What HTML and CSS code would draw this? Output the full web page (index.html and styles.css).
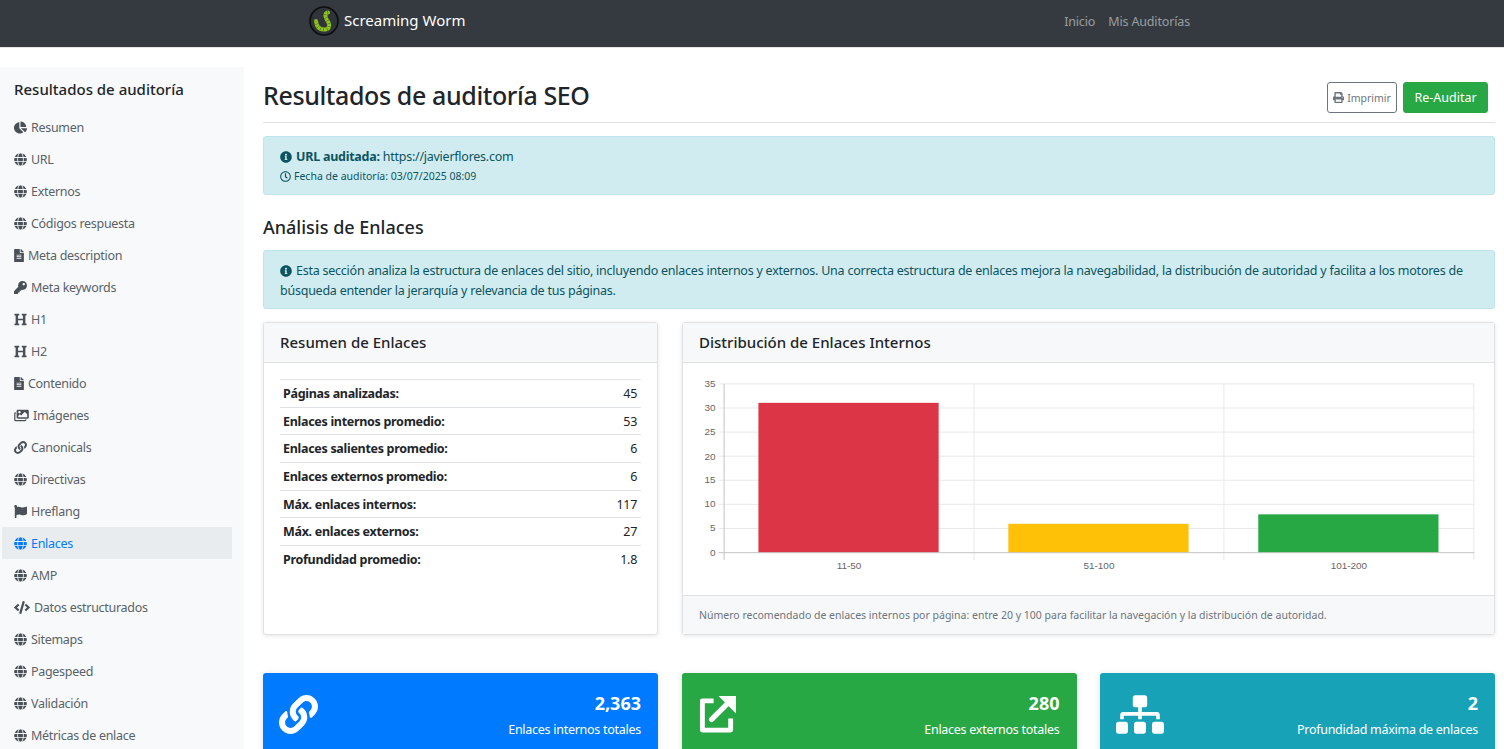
FILE: index.html
```html
<!DOCTYPE html>
<html lang="es">
<head>
    <meta charset="UTF-8">
    <meta name="viewport" content="width=device-width, initial-scale=1.0">
    <title>Resultados de auditoría SEO</title>
    <link rel="stylesheet" href="styles.css">
</head>
<body>
    <svg class="sprite" aria-hidden="true">
        <symbol id="i-globe" viewBox="0 0 496 512"><path d="M336.5 160C322 70.7 287.8 8 248 8s-74 62.7-88.5 152h177zM152 256c0 22.2 1.2 43.5 3.3 64h185.3c2.1-20.5 3.3-41.8 3.3-64s-1.2-43.5-3.3-64H155.3c-2.1 20.5-3.3 41.8-3.3 64zm324.7-96c-28.6-67.9-86.5-120.4-158-141.6 24.4 33.8 41.2 84.7 50 141.6h108zM177.2 18.4C105.8 39.6 47.8 92.1 19.3 160h108c8.7-56.9 25.5-107.8 49.9-141.6zM487.4 192H372.7c2.1 21 3.3 42.5 3.3 64s-1.2 43-3.3 64h114.6c5.5-20.5 8.6-41.8 8.6-64s-3.1-43.5-8.5-64zM120 256c0-21.5 1.2-43 3.3-64H8.6C3.2 212.5 0 233.8 0 256s3.2 43.5 8.6 64h114.6c-2-21-3.2-42.5-3.2-64zm39.5 96c14.5 89.3 48.7 152 88.5 152s74-62.7 88.5-152h-177zm159.3 141.6c71.4-21.2 129.4-73.7 158-141.6h-108c-8.8 56.9-25.6 107.8-50 141.6zM19.3 352c28.6 67.9 86.5 120.4 158 141.6-24.4-33.8-41.2-84.7-50-141.6h-108z"/></symbol>
        <symbol id="i-pie" viewBox="0 0 544 512"><path d="M527.79 288H290.5l158.03 158.03c6.04 6.04 15.98 6.53 22.19.68 38.7-36.46 65.32-85.61 73.13-140.86 1.34-9.46-6.51-17.85-16.06-17.85zm-15.83-64.8C503.72 103.74 408.26 8.28 288.8.04 279.68-.59 272 7.1 272 16.24V240h223.77c9.14 0 16.82-7.68 16.19-16.8zM224 288V50.71c0-9.55-8.39-17.4-17.84-16.06C86.99 51.49-4.1 155.6.14 280.37 4.5 408.51 114.83 513.59 243.03 511.98c50.4-.63 96.97-16.87 135.26-44.03 7.9-5.6 8.42-17.23 1.57-24.08L224 288z"/></symbol>
        <symbol id="i-file" viewBox="0 0 384 512"><path d="M224 136V0H24C10.7 0 0 10.7 0 24v464c0 13.3 10.7 24 24 24h336c13.3 0 24-10.7 24-24V160H248c-13.2 0-24-10.8-24-24zm64 236c0 6.6-5.4 12-12 12H108c-6.6 0-12-5.4-12-12v-8c0-6.6 5.4-12 12-12h168c6.6 0 12 5.4 12 12v8zm0-64c0 6.6-5.4 12-12 12H108c-6.6 0-12-5.4-12-12v-8c0-6.6 5.4-12 12-12h168c6.6 0 12 5.4 12 12v8zm0-72v8c0 6.6-5.4 12-12 12H108c-6.6 0-12-5.4-12-12v-8c0-6.6 5.4-12 12-12h168c6.6 0 12 5.4 12 12zm96-114.1v6.1H256V0h6.1c6.4 0 12.5 2.5 17 7l97.9 98c4.5 4.5 7 10.6 7 16.9z"/></symbol>
        <symbol id="i-key" viewBox="0 0 512 512"><path d="M512 176.001C512 273.203 433.202 352 336 352c-11.22 0-22.19-1.062-32.827-3.069l-24.012 27.014A23.999 23.999 0 0 1 261.223 384H224v40c0 13.255-10.745 24-24 24h-40v40c0 13.255-10.745 24-24 24H24c-13.255 0-24-10.745-24-24v-78.059c0-6.365 2.529-12.47 7.029-16.971l161.802-161.802C163.108 213.814 160 195.271 160 176 160 78.798 238.797.001 335.999 0 433.488-.001 512 78.511 512 176.001zM336 128c0 26.51 21.49 48 48 48s48-21.49 48-48-21.49-48-48-48-48 21.49-48 48z"/></symbol>
        <symbol id="i-heading" viewBox="0 0 512 512"><path d="M448 96v320h32a16 16 0 0 1 16 16v32a16 16 0 0 1-16 16H320a16 16 0 0 1-16-16v-32a16 16 0 0 1 16-16h32V288H160v128h32a16 16 0 0 1 16 16v32a16 16 0 0 1-16 16H32a16 16 0 0 1-16-16v-32a16 16 0 0 1 16-16h32V96H32a16 16 0 0 1-16-16V48a16 16 0 0 1 16-16h160a16 16 0 0 1 16 16v32a16 16 0 0 1-16 16h-32v128h192V96h-32a16 16 0 0 1-16-16V48a16 16 0 0 1 16-16h160a16 16 0 0 1 16 16v32a16 16 0 0 1-16 16z"/></symbol>
        <symbol id="i-images" viewBox="0 0 576 512"><path d="M480 416v16c0 26.51-21.49 48-48 48H48c-26.51 0-48-21.49-48-48V176c0-26.51 21.49-48 48-48h16v48H54a6 6 0 0 0-6 6v244a6 6 0 0 0 6 6h372a6 6 0 0 0 6-6v-10h48zM528 32H144c-26.51 0-48 21.49-48 48v256c0 26.51 21.49 48 48 48h384c26.51 0 48-21.49 48-48V80c0-26.51-21.49-48-48-48zM256 128c0 26.51-21.49 48-48 48s-48-21.49-48-48 21.49-48 48-48 48 21.49 48 48zm-96 144l55.515-55.515c4.686-4.686 12.284-4.686 16.971 0L272 256l135.515-135.515c4.686-4.686 12.284-4.686 16.971 0L512 208v112H160v-48z"/></symbol>
        <symbol id="i-link" viewBox="0 0 512 512"><path d="M326.612 185.391c59.747 59.809 58.927 155.698.36 214.59-.11.12-.24.25-.36.37l-67.2 67.2c-59.27 59.27-155.699 59.262-214.96 0-59.27-59.26-59.27-155.7 0-214.96l37.106-37.106c9.84-9.84 26.786-3.3 27.294 10.606.648 17.722 3.826 35.527 9.69 52.721 1.986 5.822.567 12.262-3.783 16.612l-13.087 13.087c-28.026 28.026-28.905 73.66-1.155 101.96 28.024 28.579 74.086 28.749 102.325.51l67.2-67.19c28.191-28.191 28.073-73.757 0-101.83-3.701-3.694-7.429-6.564-10.341-8.569a16.037 16.037 0 0 1-6.947-12.606c-.396-10.567 3.348-21.456 11.698-29.806l21.054-21.055c5.521-5.521 14.182-6.199 20.584-1.731a152.482 152.482 0 0 1 20.522 17.197zM467.547 44.449c-59.261-59.262-155.69-59.27-214.96 0l-67.2 67.2c-.12.12-.25.25-.36.37-58.566 58.892-59.387 154.781.36 214.59a152.454 152.454 0 0 0 20.521 17.196c6.402 4.468 15.064 3.789 20.584-1.731l21.054-21.055c8.35-8.35 12.094-19.239 11.698-29.806a16.037 16.037 0 0 0-6.947-12.606c-2.912-2.005-6.64-4.875-10.341-8.569-28.073-28.073-28.191-73.639 0-101.83l67.2-67.19c28.239-28.239 74.3-28.069 102.325.51 27.75 28.3 26.872 73.934-1.155 101.96l-13.087 13.087c-4.35 4.35-5.769 10.79-3.783 16.612 5.864 17.194 9.042 34.999 9.69 52.721.509 13.906 17.454 20.446 27.294 10.606l37.106-37.106c59.271-59.259 59.271-155.699.001-214.959z"/></symbol>
        <symbol id="i-flag" viewBox="0 0 512 512"><path d="M349.565 98.783C295.978 98.783 251.721 64 184.348 64c-24.955 0-47.309 4.384-68.045 12.013a55.947 55.947 0 0 0 3.586-23.562C118.117 24.015 94.806 1.206 66.338.048 34.345-1.254 8 24.296 8 56c0 19.026 9.497 35.825 24 45.945V488c0 13.255 10.745 24 24 24h16c13.255 0 24-10.745 24-24v-94.4c28.311-12.064 63.582-22.122 114.435-22.122 53.588 0 97.844 34.783 165.217 34.783 48.169 0 86.667-16.294 122.505-40.858C506.84 359.452 512 349.571 512 339.045v-243.1c0-23.393-24.269-38.87-45.485-29.016-34.338 15.948-76.454 31.854-116.95 31.854z"/></symbol>
        <symbol id="i-code" viewBox="0 0 640 512"><path d="M278.9 511.5l-61-17.7c-6.4-1.8-10-8.5-8.2-14.9L346.2 8.7c1.8-6.4 8.5-10 14.9-8.2l61 17.7c6.4 1.8 10 8.5 8.2 14.9L293.8 503.3c-1.9 6.4-8.5 10.1-14.9 8.2zm-114-112.2l43.5-46.4c4.6-4.9 4.3-12.7-.8-17.2L117 256l90.6-79.7c5.1-4.5 5.5-12.3.8-17.2l-43.5-46.4c-4.5-4.8-12.1-5.1-17-.5L3.8 247.2c-5.1 4.7-5.1 12.8 0 17.5l144.1 135.1c4.9 4.6 12.5 4.4 17-.5zm327.2.6l144.1-135.1c5.1-4.7 5.1-12.8 0-17.5L492.1 112.1c-4.8-4.5-12.4-4.3-17 .5L431.6 159c-4.6 4.9-4.3 12.7.8 17.2L523 256l-90.6 79.7c-5.1 4.5-5.5 12.3-.8 17.2l43.5 46.4c4.5 4.9 12.1 5.1 17 .6z"/></symbol>
        <symbol id="i-info" viewBox="0 0 512 512"><path d="M256 8C119.043 8 8 119.083 8 256c0 136.997 111.043 248 248 248s248-111.003 248-248C504 119.083 392.957 8 256 8zm0 110c23.196 0 42 18.804 42 42s-18.804 42-42 42-42-18.804-42-42 18.804-42 42-42zm56 254c0 6.627-5.373 12-12 12h-88c-6.627 0-12-5.373-12-12v-24c0-6.627 5.373-12 12-12h12v-64h-12c-6.627 0-12-5.373-12-12v-24c0-6.627 5.373-12 12-12h64c6.627 0 12 5.373 12 12v100h12c6.627 0 12 5.373 12 12v24z"/></symbol>
        <symbol id="i-clock" viewBox="0 0 512 512"><path d="M256 8C119 8 8 119 8 256s111 248 248 248 248-111 248-248S393 8 256 8zm0 448c-110.5 0-200-89.5-200-200S145.5 56 256 56s200 89.5 200 200-89.5 200-200 200zm61.8-104.4l-84.9-61.7c-3.1-2.3-4.9-5.9-4.9-9.7V116c0-6.6 5.4-12 12-12h32c6.6 0 12 5.4 12 12v141.7l66.8 48.6c5.4 3.9 6.5 11.4 2.6 16.8L334.6 349c-3.9 5.3-11.4 6.5-16.8 2.6z"/></symbol>
        <symbol id="i-print" viewBox="0 0 512 512"><path d="M448 192V77.25c0-8.49-3.37-16.62-9.37-22.63L393.37 9.37c-6-6-14.14-9.37-22.63-9.37H96C78.33 0 64 14.33 64 32v160c-35.35 0-64 28.65-64 64v112c0 8.84 7.16 16 16 16h48v96c0 17.67 14.33 32 32 32h320c17.67 0 32-14.33 32-32v-96h48c8.84 0 16-7.16 16-16V256c0-35.35-28.65-64-64-64zm-64 256H128v-96h256v96zm0-224H128V64h192v48c0 8.84 7.16 16 16 16h48v96zm48 72c-13.25 0-24-10.75-24-24 0-13.26 10.75-24 24-24s24 10.74 24 24c0 13.25-10.75 24-24 24z"/></symbol>
        <symbol id="i-sitemap" viewBox="0 0 640 512"><path d="M128 352H32c-17.67 0-32 14.33-32 32v96c0 17.67 14.33 32 32 32h96c17.67 0 32-14.33 32-32v-96c0-17.67-14.33-32-32-32zm-24-80h192v48h48v-48h192v48h48v-57.59c0-21.17-17.23-38.41-38.41-38.41H344v-64h40c17.67 0 32-14.33 32-32V32c0-17.67-14.33-32-32-32H256c-17.67 0-32 14.33-32 32v96c0 17.67 14.33 32 32 32h40v64H94.41C73.23 224 56 241.23 56 262.41V320h48v-48zm264 80h-96c-17.67 0-32 14.33-32 32v96c0 17.67 14.33 32 32 32h96c17.67 0 32-14.33 32-32v-96c0-17.67-14.33-32-32-32zm240 0h-96c-17.67 0-32 14.33-32 32v96c0 17.67 14.33 32 32 32h96c17.67 0 32-14.33 32-32v-96c0-17.67-14.33-32-32-32z"/></symbol>
    </svg>

    <nav class="navbar">
        <a class="brand" href="#">
            <svg class="brand-logo" viewBox="0 0 30 30">
                <circle cx="15" cy="15" r="14" fill="#2f343a" stroke="#0c0d0e" stroke-width="1.6"/>
                <path d="M19 6.500C15.500 7 16 11 18 14C21 18 21.500 23 16 23.500C10 24 7.500 20 7 15" fill="none" stroke="#8fc31f" stroke-width="4" stroke-linecap="round"/>
                <path d="M19 6.500C15.500 7 16 11 18 14C21 18 21.500 23 16 23.500C10 24 7.500 20 7 15" fill="none" stroke="#55730f" stroke-width="4" stroke-dasharray="0.6 2.6"/>
            </svg>
            <span class="brand-name">Screaming Worm</span>
        </a>
        <div class="nav-links">
            <a href="#">Inicio</a>
            <a href="#">Mis Auditorías</a>
        </div>
    </nav>

    <div class="layout">
        <aside class="sidebar">
            <h5 class="sidebar-title">Resultados de auditoría</h5>
            <ul class="side-menu">
                <li><a href="#"><svg class="ico"><use href="#i-pie"/></svg>Resumen</a></li>
                <li><a href="#"><svg class="ico"><use href="#i-globe"/></svg>URL</a></li>
                <li><a href="#"><svg class="ico"><use href="#i-globe"/></svg>Externos</a></li>
                <li><a href="#"><svg class="ico"><use href="#i-globe"/></svg>Códigos respuesta</a></li>
                <li><a href="#"><svg class="ico ico-file"><use href="#i-file"/></svg>Meta description</a></li>
                <li><a href="#"><svg class="ico"><use href="#i-key"/></svg>Meta keywords</a></li>
                <li><a href="#"><svg class="ico"><use href="#i-heading"/></svg>H1</a></li>
                <li><a href="#"><svg class="ico"><use href="#i-heading"/></svg>H2</a></li>
                <li><a href="#"><svg class="ico ico-file"><use href="#i-file"/></svg>Contenido</a></li>
                <li><a href="#"><svg class="ico ico-wide"><use href="#i-images"/></svg>Imágenes</a></li>
                <li><a href="#"><svg class="ico"><use href="#i-link"/></svg>Canonicals</a></li>
                <li><a href="#"><svg class="ico"><use href="#i-globe"/></svg>Directivas</a></li>
                <li><a href="#"><svg class="ico"><use href="#i-flag"/></svg>Hreflang</a></li>
                <li class="active"><a href="#"><svg class="ico"><use href="#i-globe"/></svg>Enlaces</a></li>
                <li><a href="#"><svg class="ico"><use href="#i-globe"/></svg>AMP</a></li>
                <li><a href="#"><svg class="ico ico-code"><use href="#i-code"/></svg>Datos estructurados</a></li>
                <li><a href="#"><svg class="ico"><use href="#i-globe"/></svg>Sitemaps</a></li>
                <li><a href="#"><svg class="ico"><use href="#i-globe"/></svg>Pagespeed</a></li>
                <li><a href="#"><svg class="ico"><use href="#i-globe"/></svg>Validación</a></li>
                <li><a href="#"><svg class="ico"><use href="#i-globe"/></svg>Métricas de enlace</a></li>
            </ul>
        </aside>

        <main class="content">
            <div class="page-head">
                <h1>Resultados de auditoría SEO</h1>
                <div class="head-actions">
                    <button class="btn btn-outline"><svg class="ico-print"><use href="#i-print"/></svg>Imprimir</button>
                    <button class="btn btn-success">Re-Auditar</button>
                </div>
            </div>

            <div class="alert alert-url">
                <p class="url-line"><svg class="ico-info"><use href="#i-info"/></svg><strong>URL auditada:</strong> https://javierflores.com</p>
                <p class="date-line"><svg class="ico-clock"><use href="#i-clock"/></svg>Fecha de auditoría: 03/07/2025 08:09</p>
            </div>

            <h2>Análisis de Enlaces</h2>

            <div class="alert alert-text">
                <svg class="ico-info"><use href="#i-info"/></svg>Esta sección analiza la estructura de enlaces del sitio, incluyendo enlaces internos y externos. Una correcta estructura de enlaces mejora la navegabilidad, la distribución de autoridad y facilita a los motores de búsqueda entender la jerarquía y relevancia de tus páginas.
            </div>

            <div class="cards-row">
                <section class="card">
                    <h3 class="card-header">Resumen de Enlaces</h3>
                    <div class="card-body">
                        <table class="summary">
                            <tr><th>Páginas analizadas:</th><td>45</td></tr>
                            <tr><th>Enlaces internos promedio:</th><td>53</td></tr>
                            <tr><th>Enlaces salientes promedio:</th><td>6</td></tr>
                            <tr><th>Enlaces externos promedio:</th><td>6</td></tr>
                            <tr><th>Máx. enlaces internos:</th><td>117</td></tr>
                            <tr><th>Máx. enlaces externos:</th><td>27</td></tr>
                            <tr><th>Profundidad promedio:</th><td>1.8</td></tr>
                        </table>
                    </div>
                </section>

                <section class="card">
                    <h3 class="card-header">Distribución de Enlaces Internos</h3>
                    <svg class="chart" viewBox="0 0 811 233">
                        <g class="grid">
                            <path d="M34 21H793M34 45.200H793M34 69.400H793M34 93.600H793M34 117.800H793M34 142H793M34 166.200H793"/>
                            <path d="M290.500 21V198M541.500 21V198M792.500 21V198"/>
                        </g>
                        <rect x="74" y="40" width="181" height="150.500" fill="#dc3545"/>
                        <rect x="325" y="161.500" width="181" height="29" fill="#ffc107"/>
                        <rect x="576" y="152" width="181" height="38.500" fill="#28a745"/>
                        <path class="axis" d="M39.500 21V198M34 190.500H793"/>
                        <g class="tick-y">
                            <text x="31" y="24">35</text>
                            <text x="31" y="48">30</text>
                            <text x="31" y="72">25</text>
                            <text x="31" y="97">20</text>
                            <text x="31" y="121">15</text>
                            <text x="31" y="145">10</text>
                            <text x="31" y="169">5</text>
                            <text x="31" y="194">0</text>
                        </g>
                        <g class="tick-x">
                            <text x="165" y="207">11-50</text>
                            <text x="416" y="207">51-100</text>
                            <text x="667" y="207">101-200</text>
                        </g>
                    </svg>
                    <div class="card-footer">Número recomendado de enlaces internos por página: entre 20 y 100 para facilitar la navegación y la distribución de autoridad.</div>
                </section>
            </div>

            <div class="stats-row">
                <div class="stat stat-blue">
                    <svg class="stat-icon"><use href="#i-link"/></svg>
                    <div class="stat-text"><div class="stat-num">2,363</div><div class="stat-label">Enlaces internos totales</div></div>
                </div>
                <div class="stat stat-green">
                    <svg class="stat-icon" viewBox="0 0 40 40">
                        <path d="M16 6H4.500V36H33.500V24" fill="none" stroke="#fff" stroke-width="5" stroke-linejoin="round"/>
                        <path d="M14 25L31 8" fill="none" stroke="#fff" stroke-width="5.500" stroke-linecap="round"/>
                        <path d="M21 1H39V19Z" fill="#fff"/>
                    </svg>
                    <div class="stat-text"><div class="stat-num">280</div><div class="stat-label">Enlaces externos totales</div></div>
                </div>
                <div class="stat stat-teal">
                    <svg class="stat-icon stat-icon-wide"><use href="#i-sitemap"/></svg>
                    <div class="stat-text"><div class="stat-num">2</div><div class="stat-label">Profundidad máxima de enlaces</div></div>
                </div>
            </div>
        </main>
    </div>
</body>
</html>
```

FILE: styles.css
```css
html, body {
    height: 100%;
    overflow: hidden;
}
body {
    margin: 0;
    background: #fff;
    color: #212529;
    font-family: "Noto Sans", "Open Sans", sans-serif;
    font-size: 12.5px;
}
a {
    color: inherit;
    text-decoration: none;
}
.sprite {
    display: none;
}

/* barra superior */
.navbar {
    display: flex;
    justify-content: space-between;
    align-items: center;
    box-sizing: border-box;
    height: 48px;
    padding: 0 314px 5px 309px;
    background: #343a40;
    border-bottom: 1px solid #e3e5e7;
}
.brand {
    display: flex;
    align-items: center;
    gap: 5px;
    color: #fff;
    font-size: 15px;
}
.brand-logo {
    width: 30px;
    height: 30px;
}
.brand-name {
    margin-bottom: 3px;
}
.nav-links {
    display: flex;
    gap: 13px;
    color: rgba(255, 255, 255, 0.5);
    font-size: 12.5px;
    letter-spacing: -0.15px;
}

/* layout */
.layout {
    display: flex;
    align-items: flex-start;
    padding-top: 19px;
}
.sidebar {
    flex: 0 0 244px;
    box-sizing: border-box;
    height: 700px;
    padding: 11px 12px 0 2px;
    background: #f8f9fa;
}
.sidebar-title {
    margin: 0 0 11px 12px;
    font-size: 15px;
    font-weight: 500;
    line-height: 22px;
}
.side-menu {
    margin: 0;
    padding: 0;
    list-style: none;
    letter-spacing: -0.3px;
}
.side-menu a {
    display: flex;
    align-items: center;
    height: 32px;
    padding-left: 12px;
    color: #5a6268;
}
.side-menu .active a {
    background: #e9ecef;
    color: #007bff;
}
.ico {
    flex: none;
    width: 13px;
    height: 13px;
    margin-right: 4px;
    fill: #495057;
}
.ico-file {
    width: 10px;
}
.ico-wide {
    width: 15px;
}
.ico-code {
    width: 16px;
}
.active .ico {
    fill: #007bff;
}

/* contenido */
.content {
    flex: 1;
    padding: 0 9px 0 19px;
}
.page-head {
    display: flex;
    justify-content: space-between;
    align-items: center;
    height: 55px;
    border-bottom: 1px solid #dee2e6;
}
h1 {
    margin: 0;
    font-size: 25px;
    font-weight: 500;
    letter-spacing: -0.38px;
}
.head-actions {
    display: flex;
    gap: 6px;
    margin: 6px 7px 0 0;
}
.btn {
    height: 31px;
    border-radius: 3px;
    font-family: inherit;
}
.btn-outline {
    display: flex;
    align-items: center;
    gap: 3px;
    width: 70px;
    padding: 0;
    justify-content: center;
    background: #fff;
    border: 1px solid #6c757d;
    color: #6c757d;
    font-size: 10.5px;
}
.ico-print {
    width: 11px;
    height: 11px;
    fill: #6c757d;
}
.btn-success {
    width: 85px;
    background: #28a745;
    border: 1px solid #28a745;
    color: #fff;
    font-size: 12.5px;
}
.alert {
    box-sizing: border-box;
    margin-top: 13px;
    padding: 0 16px;
    background: #d1ecf1;
    border: 1px solid #bee5eb;
    border-radius: 3px;
    color: #0c5460;
}
.alert p {
    margin: 0;
}
.alert-url {
    height: 59px;
    padding-top: 10px;
}
.url-line {
    line-height: 20px;
    letter-spacing: -0.25px;
}
.date-line {
    display: flex;
    align-items: center;
    font-size: 10.5px;
    line-height: 19px;
}
.ico-info {
    width: 12px;
    height: 12px;
    margin-right: 4px;
    fill: #0c5460;
    vertical-align: -2px;
}
.ico-clock {
    width: 11px;
    height: 11px;
    margin-right: 3px;
    fill: #0c5460;
}
h2 {
    margin: 20px 0 0;
    font-size: 18px;
    font-weight: 500;
    line-height: 24px;
}
.alert-text {
    height: 59px;
    margin-top: 11px;
    padding-top: 10px;
    line-height: 20px;
    letter-spacing: -0.24px;
}

/* tarjetas */
.cards-row {
    display: grid;
    grid-template-columns: 395px 1fr;
    gap: 24px;
    margin-top: 13px;
}
.card {
    display: flex;
    flex-direction: column;
    height: 313px;
    box-sizing: border-box;
    background: #fff;
    border: 1px solid #dfe1e3;
    border-radius: 3px;
    box-shadow: 0 1px 4px rgba(0, 0, 0, 0.1);
}
.card-header {
    box-sizing: border-box;
    height: 40px;
    margin: 0;
    padding: 0 16px;
    background: #f7f8f9;
    border-bottom: 1px solid #dfe1e3;
    font-size: 15px;
    font-weight: 500;
    line-height: 39px;
}
.card-body {
    padding: 16px;
}
.summary {
    width: 100%;
    border-collapse: collapse;
    letter-spacing: -0.3px;
}
.summary th, .summary td {
    height: 27.700px;
    padding: 0 4px 0 3px;
    border-top: 1px solid #dee2e6;
    box-sizing: border-box;
}
.summary th {
    text-align: left;
    font-weight: 700;
}
.summary td {
    text-align: right;
}
.chart {
    display: block;
    width: 100%;
    height: 233px;
}
.grid path {
    fill: none;
    stroke: #e9e9e9;
    stroke-width: 1;
}
.axis {
    fill: none;
    stroke: #c4c4c4;
    stroke-width: 1;
}
.chart text {
    fill: #666;
    font-family: "Liberation Sans", sans-serif;
    font-size: 10px;
}
.tick-y text {
    text-anchor: end;
}
.tick-x text {
    text-anchor: middle;
}
.card-footer {
    flex: 1;
    padding: 0 16px;
    background: #f7f8f9;
    border-top: 1px solid #dfe1e3;
    color: #6c757d;
    font-size: 10.5px;
    line-height: 38px;
}

/* indicadores */
.stats-row {
    display: grid;
    grid-template-columns: repeat(3, 1fr);
    gap: 23.500px;
    margin-top: 38px;
}
.stat {
    display: flex;
    justify-content: space-between;
    box-sizing: border-box;
    height: 100px;
    padding: 18px 17px 18px 16px;
    border-radius: 3px;
    color: #fff;
    box-shadow: 0 1px 6px rgba(0, 0, 0, 0.12);
}
.stat-blue {
    background: #007bff;
}
.stat-green {
    background: #28a745;
}
.stat-teal {
    background: #17a2b8;
}
.stat-icon {
    width: 39px;
    height: 39px;
    margin-top: 4px;
    fill: #fff;
}
.stat-icon-wide {
    width: 48px;
}
.stat-text {
    text-align: right;
}
.stat-num {
    font-size: 18px;
    font-weight: 700;
    line-height: 24px;
}
.stat-label {
    margin-top: 4px;
    font-size: 12.5px;
    line-height: 22px;
    letter-spacing: -0.27px;
}
```
